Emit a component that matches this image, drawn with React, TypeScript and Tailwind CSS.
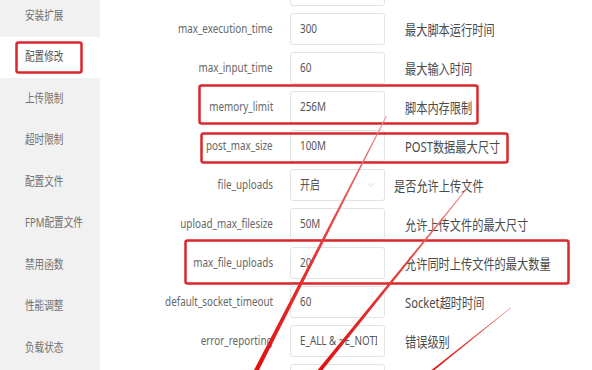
import React from 'react';
import { ChevronDown } from 'lucide-react';

interface ConfigRow {
  name: string;
  value: string;
  desc: string;
  select?: boolean;
}

const menu = ['安装扩展', '配置修改', '上传限制', '超时限制', '配置文件', 'FPM配置文件', '禁用函数', '性能调整', '负载状态'];

// first and last rows are only partly in view
const rows: ConfigRow[] = [
  { name: '', value: '', desc: '' },
  { name: 'max_execution_time', value: '300', desc: '最大脚本运行时间' },
  { name: 'max_input_time', value: '60', desc: '最大输入时间' },
  { name: 'memory_limit', value: '256M', desc: '脚本内存限制' },
  { name: 'post_max_size', value: '100M', desc: 'POST数据最大尺寸' },
  { name: 'file_uploads', value: '开启', desc: '是否允许上传文件', select: true },
  { name: 'upload_max_filesize', value: '50M', desc: '允许上传文件的最大尺寸' },
  { name: 'max_file_uploads', value: '20', desc: '允许同时上传文件的最大数量' },
  { name: 'default_socket_timeout', value: '60', desc: 'Socket超时时间' },
  { name: 'error_reporting', value: 'E_ALL & ~E_NOTICE', desc: '错误级别' },
  { name: '', value: '', desc: '' },
];

const font = { fontFamily: '"Noto Sans", "Noto Sans CJK SC", sans-serif' };

const Sidebar = () => (
  <div className="w-[100px] shrink-0 bg-[#f1f1f1]">
    <div className="-mt-[5px]">
      {menu.map((item) => {
        const active = item === '配置修改';
        return (
          <div
            key={item}
            className={`flex h-[41.5px] items-center pl-[25px] ${active ? 'bg-white text-[#555]' : 'text-[#707070]'}`}
          >
            <span className="inline-block origin-left scale-x-[0.8] whitespace-nowrap text-[12px]">{item}</span>
          </div>
        );
      })}
    </div>
  </div>
);

const Row = ({ row }: { row: ConfigRow }) => (
  <div className="flex h-[32px] items-center">
    <div className="w-[173px] shrink-0 text-right text-[13px] text-[#666]">
      <span className="inline-block origin-right scale-x-[0.76] whitespace-nowrap">{row.name}</span>
    </div>
    <div className="ml-[17px] flex h-[32px] w-[95px] shrink-0 items-center rounded-[3px] border border-[#e3e3e3] bg-white pl-[9px] pr-[7px]">
      <div className="flex-1 overflow-hidden whitespace-nowrap text-[13px] text-[#555]">
        <span className="inline-block origin-left scale-x-[0.76]">{row.value}</span>
      </div>
      {row.select && <ChevronDown className="h-3 w-3 shrink-0 text-[#c8c8c8]" strokeWidth={1.5} />}
    </div>
    <div className={`${row.select ? 'ml-[9px]' : 'ml-[20px]'} text-[14px] text-[#4a4a4a]`}>
      <span className="inline-block origin-left scale-x-[0.8] whitespace-nowrap">{row.desc}</span>
    </div>
  </div>
);

const Annotations = () => (
  <svg className="pointer-events-none absolute left-0 top-0" width={592} height={370} viewBox="0 0 592 370">
    <defs>
      <linearGradient id="fade" x1="0" y1="0" x2="0" y2="1">
        <stop offset="0" stopColor="#e88a8a" />
        <stop offset="0.5" stopColor="#e23a3a" />
        <stop offset="1" stopColor="#e01010" />
      </linearGradient>
    </defs>
    <g fill="none" stroke="#d9272d" strokeWidth={2.5}>
      <rect x={16.5} y={42.5} width={65} height={30} rx={2} />
      <rect x={199.5} y={85.5} width={278} height={38} rx={2} />
      <rect x={201.5} y={133.5} width={306} height={29} rx={2} />
      <rect x={185.5} y={240.5} width={383} height={43} rx={2} />
    </g>
    <g fill="url(#fade)">
      <polygon points="386,116 387,116 258,372 253,372" />
      <polygon points="470,184 471,184 321,372 316,372" />
      <polygon points="510,308 511,308 432,372 429,372" />
    </g>
  </svg>
);

export default function App() {
  return (
    <div className="relative h-[370px] w-[592px] overflow-hidden bg-white" style={font}>
      <div className="flex h-full">
        <Sidebar />
        <div className="flex-1">
          <div className="-mt-[26px] flex flex-col gap-[7px]">
            {rows.map((row, i) => (
              <Row key={i} row={row} />
            ))}
          </div>
        </div>
      </div>
      <Annotations />
    </div>
  );
}
